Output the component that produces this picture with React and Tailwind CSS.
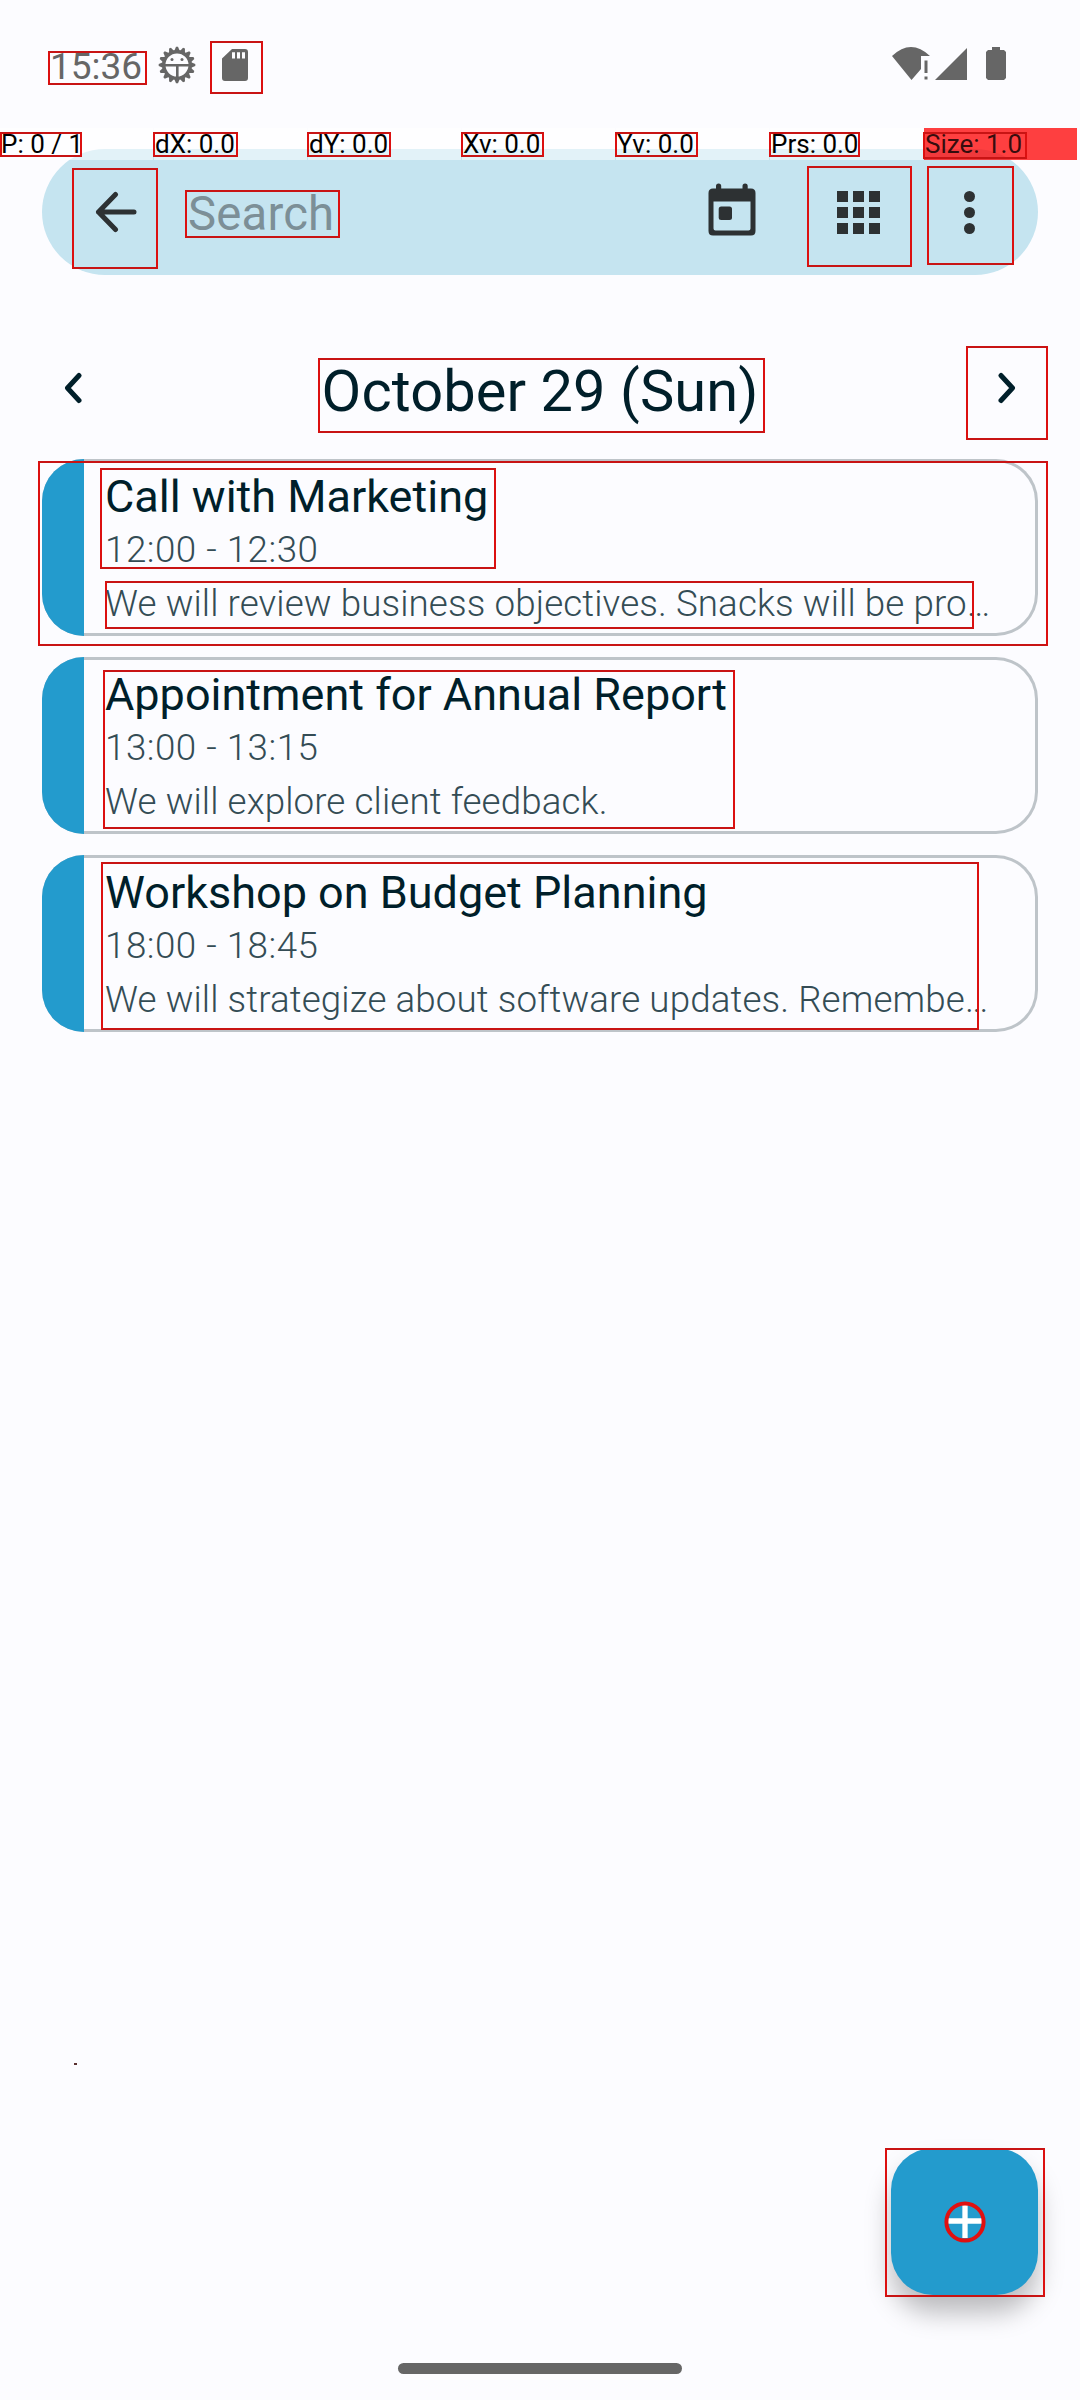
const events = [
  {
    title: "Call with Marketing",
    time: "12:00 - 12:30",
    note: "We will review business objectives. Snacks will be pro…",
  },
  {
    title: "Appointment for Annual Report",
    time: "13:00 - 13:15",
    note: "We will explore client feedback.",
  },
  {
    title: "Workshop on Budget Planning",
    time: "18:00 - 18:45",
    note: "We will strategize about software updates. Remembe…",
  },
];

const pointerCells = ["P: 0 / 1", "dX: 0.0", "dY: 0.0", "Xv: 0.0", "Yv: 0.0", "Prs: 0.0", "Size: 1.0"];

/* Detected regions outlined over the screen: left, top, right, bottom. */
const outlines = [
  [48, 51, 147, 85],
  [210, 41, 263, 94],
  [0, 132, 82, 157],
  [153, 132, 238, 157],
  [307, 132, 391, 157],
  [461, 132, 544, 157],
  [615, 132, 698, 157],
  [769, 132, 860, 157],
  [923, 132, 1027, 159],
  [72, 168, 158, 269],
  [185, 190, 340, 238],
  [807, 166, 912, 267],
  [927, 166, 1014, 265],
  [318, 358, 765, 433],
  [966, 346, 1048, 440],
  [38, 461, 1048, 646],
  [100, 468, 496, 569],
  [105, 581, 974, 629],
  [103, 670, 735, 829],
  [101, 862, 979, 1030],
  [885, 2148, 1045, 2297],
];

function Outline({ box: [l, t, r, b] }) {
  return (
    <div
      className="absolute border-2 border-t-[#c81414] border-r-[#dc1010] border-b-[#c81414] border-l-[#dc1010]"
      style={{ left: l, top: t, width: r - l, height: b - t }}
    />
  );
}

const teeth = Array.from({ length: 16 }, (_, i) => i * 22.5);

function DebugIcon() {
  return (
    <svg width="38" height="38" viewBox="-19 -19 38 38" fill="none">
      {teeth.map((a) => (
        <path key={a} d="M-3 -13.5L-1 -18.300H1L3 -13.5Z" fill="#666" transform={`rotate(${a})`} />
      ))}
      <circle r="13.200" stroke="#666" strokeWidth="3.400" />
      <path d="M-13 0.3H13M0.3 0.3V13" stroke="#666" strokeWidth="2.6" />
      <circle cx="-5" cy="-5.5" r="1.5" fill="#666" />
      <circle cx="5" cy="-5.5" r="1.5" fill="#666" />
    </svg>
  );
}

function StatusBar() {
  return (
    <div className="flex h-[149px] items-start pt-[44px] text-[#666]">
      <span className="mt-[2px] ml-[50px] w-[108px] text-[37px] leading-[42px]">15:36</span>
      <span className="mt-[2px]"><DebugIcon /></span>
      <svg className="mt-[5px] ml-[26px]" width="26" height="32" viewBox="0 0 26 32">
        <path
          fill="#666"
          fillRule="evenodd"
          d="M10 0H23Q26 0 26 3V29Q26 32 23 32H3Q0 32 0 29V9.600ZM10 3.300V9.600H13V3.300ZM15 3.300V9.600H18V3.300ZM20 3.300V9.600H23V3.300Z"
        />
      </svg>
      <svg className="mt-[3px] ml-[644px]" width="38" height="33" viewBox="0 0 38 33">
        <path fill="#666" d="M0 9Q19 -9 38 9H29V22L19.500 33Z" />
        <path fill="#666" d="M32.500 13.500H35.500V26H32.500ZM32.500 29.500H35.500V32.500H32.500Z" />
      </svg>
      <svg className="mt-[3px] ml-[5px]" width="32" height="33" viewBox="0 0 32 33">
        <path fill="#666" d="M32 1V33H0Z" />
      </svg>
      <svg className="mt-[3px] ml-[19px]" width="20" height="33" viewBox="0 0 20 33">
        <path fill="#666" d="M6 0H14V3H18L20 5V31L18 33H2L0 31V5L2 3H6Z" />
      </svg>
    </div>
  );
}

function SearchBar() {
  return (
    <div className="mx-[42px] flex h-[126px] items-center rounded-full bg-[#c5e4f0]">
      <svg className="ml-[53px]" width="42" height="42" viewBox="0 0 42 42" fill="none" stroke="#2d3133" strokeWidth="5" strokeLinecap="round" strokeLinejoin="round">
        <path d="M20.500 3.500L3.500 21L20.500 38.500M3.500 21H39" />
      </svg>
      <span className="mt-[4px] ml-[51px] w-[478px] shrink-0 text-[47.25px] tracking-[0.2px] text-[#7c8f97]">Search</span>
      <svg className="-mt-[5px] ml-[42px]" width="48" height="53" viewBox="0 0 48 53">
        <path
          fill="#2d3133"
          fillRule="evenodd"
          d="M8 5.500V3A2.600 2.600 0 0 1 13.200 3V5.500H34.500V3A2.600 2.600 0 0 1 39.700 3V5.500H43Q47.500 5.500 47.500 10V48Q47.500 52.500 43 52.500H5Q0.500 52.500 0.500 48V10Q0.500 5.500 5 5.500ZM5.500 18.500V45.500Q5.500 47.500 7.500 47.500H40.500Q42.500 47.500 42.500 45.500V18.500Z"
        />
        <rect x="10.700" y="23.500" width="13.300" height="13.500" rx="2.500" fill="#2d3133" />
      </svg>
      <div className="ml-[81px] grid grid-cols-3 gap-[5px]">
        {Array.from({ length: 9 }, (_, i) => (
          <span key={i} className="size-[11px] bg-[#2d3133]" />
        ))}
      </div>
      <div className="ml-[84px] grid gap-[5px]">
        <span className="size-[11px] rounded-full bg-[#2d3133]" />
        <span className="size-[11px] rounded-full bg-[#2d3133]" />
        <span className="size-[11px] rounded-full bg-[#2d3133]" />
      </div>
    </div>
  );
}

function Chevron({ flip }) {
  return (
    <svg className={flip ? "rotate-180" : ""} width="18" height="32" viewBox="0 0 18 32" fill="none" stroke="#001f2a" strokeWidth="5" strokeLinecap="round" strokeLinejoin="round">
      <path d="M15 3.500L3.500 16L15 28.500" />
    </svg>
  );
}

function EventCard({ event }) {
  return (
    <div className="flex h-[177px] overflow-hidden rounded-[42px] bg-[#bec4c9]">
      <div className="w-[42px] shrink-0 bg-[#239bcd]" />
      <div className="my-[3px] mr-[3px] flex-1 rounded-r-[39px] bg-[#fcfcff] pt-[7px] pl-[21px] whitespace-nowrap text-[#344c55]">
        <div className="h-[55px] text-[45px] leading-[56px] text-[#001f2a]">{event.title}</div>
        <div className="h-[54px] text-[36.75px] leading-[51px] font-light tracking-[0.5px]">{event.time}</div>
        <div className="text-[36.75px] leading-[51px] font-light tracking-[0.1px]">{event.note}</div>
      </div>
    </div>
  );
}

export default function App() {
  return (
    <div className="relative flex h-[2400px] w-[1080px] flex-col overflow-hidden bg-[#fcfcff] font-['Roboto',sans-serif]">
      <StatusBar />
      <SearchBar />

      <div className="flex h-[184px] items-center justify-between px-[64px] pt-[42px]">
        <Chevron />
        <h1 className="mt-[5px] text-[57.75px] leading-[68px] tracking-[0.1px] text-[#001f2a]">October 29 (Sun)</h1>
        <Chevron flip />
      </div>

      <div className="mx-[42px] flex flex-col gap-[21px]">
        {events.map((e) => (
          <EventCard key={e.title} event={e} />
        ))}
      </div>

      <div className="mt-auto mb-[26px] flex flex-col">
        <span className="mb-[83px] ml-[74px] h-[2px] w-[3px] bg-[#5a3030]" />
        <button className="mr-[42px] flex size-[147px] items-center justify-center self-end rounded-[42px] bg-[#239bcd] shadow-[0_18px_26px_rgba(0,0,0,0.26)]">
          <svg width="42" height="42" viewBox="-21 -21 42 42" fill="none">
            <path d="M-17 -1H17M0 -18V16" stroke="#fff" strokeWidth="5.300" />
            <circle r="18.600" stroke="#e01010" strokeWidth="4" />
          </svg>
        </button>
        <span className="mt-[68px] h-[11px] w-[284px] self-center rounded-full bg-[#666]" />
      </div>

      <div className="absolute top-[128px] left-0 flex h-[32px] w-[1077px] gap-[1px]">
        {pointerCells.map((label, i) => (
          <div
            key={label}
            className={
              i === 6
                ? "flex-1 basis-0 bg-[#ff0000]/75 pl-[1px] text-[26px] leading-[33px] whitespace-nowrap text-black/80"
                : "flex-1 basis-0 bg-white/50 pl-[1px] text-[26px] leading-[33px] whitespace-nowrap text-black"
            }
          >
            {label}
          </div>
        ))}
      </div>

      {outlines.map((b) => (
        <Outline key={b.join()} box={b} />
      ))}
    </div>
  );
}
